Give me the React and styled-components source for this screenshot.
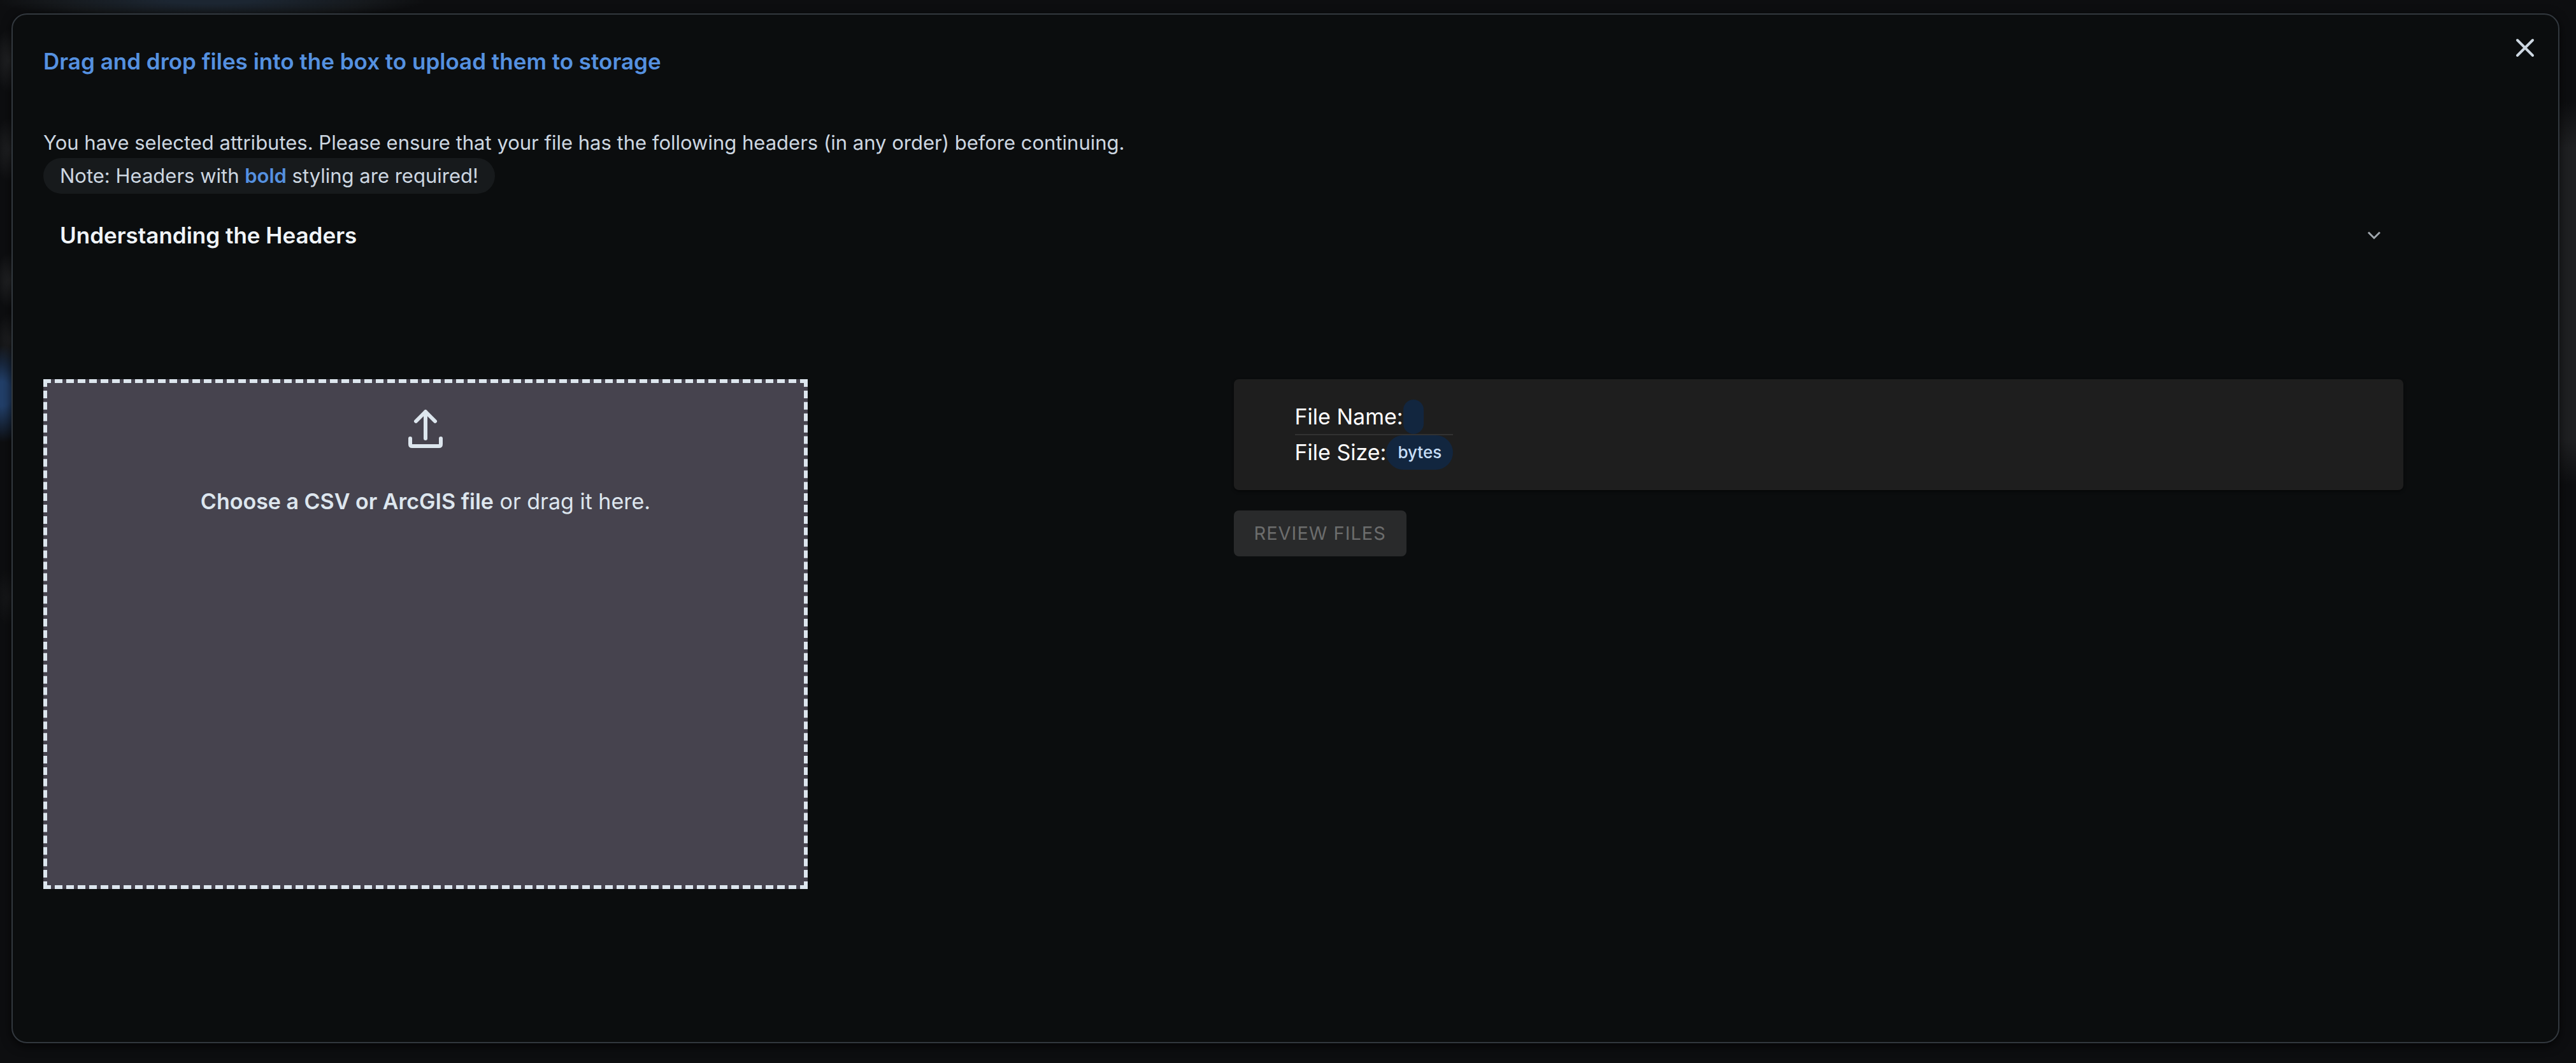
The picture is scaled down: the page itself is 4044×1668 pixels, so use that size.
import React, { useState } from "react";
import styled, { createGlobalStyle } from "styled-components";

const GlobalStyle = createGlobalStyle`
  *, *::before, *::after { box-sizing: border-box; }
  body {
    margin: 0;
    background: #0d0e10;
    color: #cdd7e1;
    font-family: Inter, "Liberation Sans", sans-serif;
    font-size: 31px;
    line-height: 48px;
  }
  h1, h2, p { margin: 0; }
  button { font: inherit; color: inherit; border: 0; background: none; padding: 0; cursor: pointer; }
`;

const Backdrop = styled.div`
  display: flex;
  min-height: 100vh;
  padding: 21px 26px 31px 18px;
  background:
    radial-gradient(ellipse 60px 76px at 4px 618px, #223f69 25%, transparent 100%),
    radial-gradient(ellipse 24px 50px at 14px 95px, #222325, transparent 100%),
    radial-gradient(ellipse 24px 50px at 14px 235px, #202123, transparent 100%),
    radial-gradient(ellipse 24px 44px at 16px 440px, #242527, transparent 100%),
    radial-gradient(ellipse 24px 44px at 16px 535px, #202123, transparent 100%),
    radial-gradient(ellipse 24px 44px at 14px 937px, #17181a, transparent 100%),
    radial-gradient(ellipse 340px 32px at 330px 0, #1c2632 20%, #15181b 75%, transparent 100%),
    linear-gradient(transparent, #1f2022 12%, #1f2022 88%, transparent) right 160px / 26px 600px no-repeat,
    #0d0e10;
`;

const Dialog = styled.section`
  flex: 1;
  min-width: 0;
  background: #0b0d0e;
  border: 2px solid #32383e;
  border-radius: 24px;
  box-shadow: 0 4px 16px rgba(0, 0, 0, 0.7);
`;

const Header = styled.header`
  display: flex;
  justify-content: space-between;
  padding: 28px 28px 0 48px;
`;

const Title = styled.h1`
  padding-top: 21px;
  font-size: 35px;
  line-height: 48px;
  font-weight: 600;
  color: #5591e0;
`;

const CloseButton = styled.button`
  width: 48px;
  height: 48px;
  svg { display: block; }
`;

const Content = styled.div`
  display: flex;
  flex-direction: column;
  width: 95%;
`;

const Body = styled.div`
  padding: 80px 48px 48px;
`;

const Note = styled.p`
  align-self: flex-start;
  padding: 4px 26px;
  border-radius: 28px;
  background: #171a1c;
  strong { font-weight: 600; color: #5591e0; }
`;

const AccordionToggle = styled.button`
  display: flex;
  justify-content: space-between;
  align-items: center;
  margin-top: 25px;
  padding: 16px 26px;
  font-size: 35px;
  font-weight: 600;
  color: #f0f4f8;
  text-align: left;
`;

const Columns = styled.div`
  display: grid;
  grid-template-columns: 1fr 1fr;
  gap: 32px;
  align-items: start;
  margin-top: 186px;
`;

const DropZone = styled.label`
  display: flex;
  flex-direction: column;
  align-items: center;
  gap: 56px;
  max-width: 1200px;
  min-height: 800px;
  padding: 34px 24px;
  border: 6px dashed #dde6ee;
  background: #46434e;
  color: #dde6ee;
  font-size: 34px;
  cursor: pointer;
  strong { font-weight: 600; }
`;

const FileInput = styled.input`
  position: absolute;
  width: 1px;
  height: 1px;
  opacity: 0;
`;

const Side = styled.div`
  display: flex;
  flex-direction: column;
  align-items: flex-start;
  gap: 32px;
`;

const FileCard = styled.div`
  align-self: stretch;
  display: flex;
  padding: 32px 96px;
  border-radius: 8px;
  background: #1e1e1e;
  box-shadow: 0 2px 4px rgba(0, 0, 0, 0.5);
`;

const FileRow = styled.div`
  display: flex;
  align-items: center;
  height: 54px;
  box-sizing: content-box;
  color: #fff;
  font-size: 34px;
  & + & { border-top: 2px solid #323232; }
`;

const Chip = styled.span`
  height: 54px;
  padding: 0 ${(p) => (p.$empty ? 16 : 18)}px;
  border-radius: 27px;
  background: #12263f;
  color: #c7dff7;
  font-size: 26px;
  line-height: 54px;
  font-weight: 500;
`;

const ReviewButton = styled.button`
  padding: 12px 32px;
  border-radius: 8px;
  background: #292a2b;
  color: #6c6d6d;
  font-size: 29px;
  letter-spacing: 1px;
  text-transform: uppercase;
  cursor: default;
`;

const UploadIcon = () => (
  <svg width="72" height="72" viewBox="0 0 72 72" fill="none" stroke="currentColor" strokeWidth="6" strokeLinecap="round" strokeLinejoin="round" aria-hidden="true">
    <path d="M36 53V11M21 26L36 11L51 26M12 53V62Q12 65 15 65H57Q60 65 60 62V53" />
  </svg>
);

const CloseIcon = () => (
  <svg width="48" height="48" viewBox="0 0 48 48" fill="none" stroke="#cdd7e1" strokeWidth="4" strokeLinecap="round" aria-hidden="true">
    <path d="M12 12L36 36M36 12L12 36" />
  </svg>
);

const ChevronIcon = () => (
  <svg width="40" height="40" viewBox="0 0 40 40" fill="none" stroke="#9fa6ad" strokeWidth="3" aria-hidden="true">
    <path d="M11 15.5L20 24.5L29 15.5" />
  </svg>
);

export default function App() {
  const [open, setOpen] = useState(false);
  return (
    <>
      <GlobalStyle />
      <Backdrop>
        <Dialog role="dialog" aria-labelledby="upload-title">
          <Header>
            <Title id="upload-title">Drag and drop files into the box to upload them to storage</Title>
            <CloseButton type="button" aria-label="Close"><CloseIcon /></CloseButton>
          </Header>
          <Body>
            <Content>
              <p>
                You have selected attributes. Please ensure that your file has the following headers (in any order) before continuing.
              </p>
              <Note>Note: Headers with <strong>bold</strong> styling are required!</Note>
              <AccordionToggle type="button" aria-expanded={open} onClick={() => setOpen(!open)}>
                Understanding the Headers
                <ChevronIcon />
              </AccordionToggle>
              <Columns>
                <DropZone htmlFor="upload-file">
                  <FileInput id="upload-file" type="file" />
                  <UploadIcon />
                  <span><strong>Choose a CSV or ArcGIS file</strong> or drag it here.</span>
                </DropZone>
                <Side>
                  <FileCard>
                    <div>
                      <FileRow>File Name:<Chip $empty /></FileRow>
                      <FileRow>File Size:<Chip>bytes</Chip></FileRow>
                    </div>
                  </FileCard>
                  <ReviewButton type="button" disabled>Review Files</ReviewButton>
                </Side>
              </Columns>
            </Content>
          </Body>
        </Dialog>
      </Backdrop>
    </>
  );
}
